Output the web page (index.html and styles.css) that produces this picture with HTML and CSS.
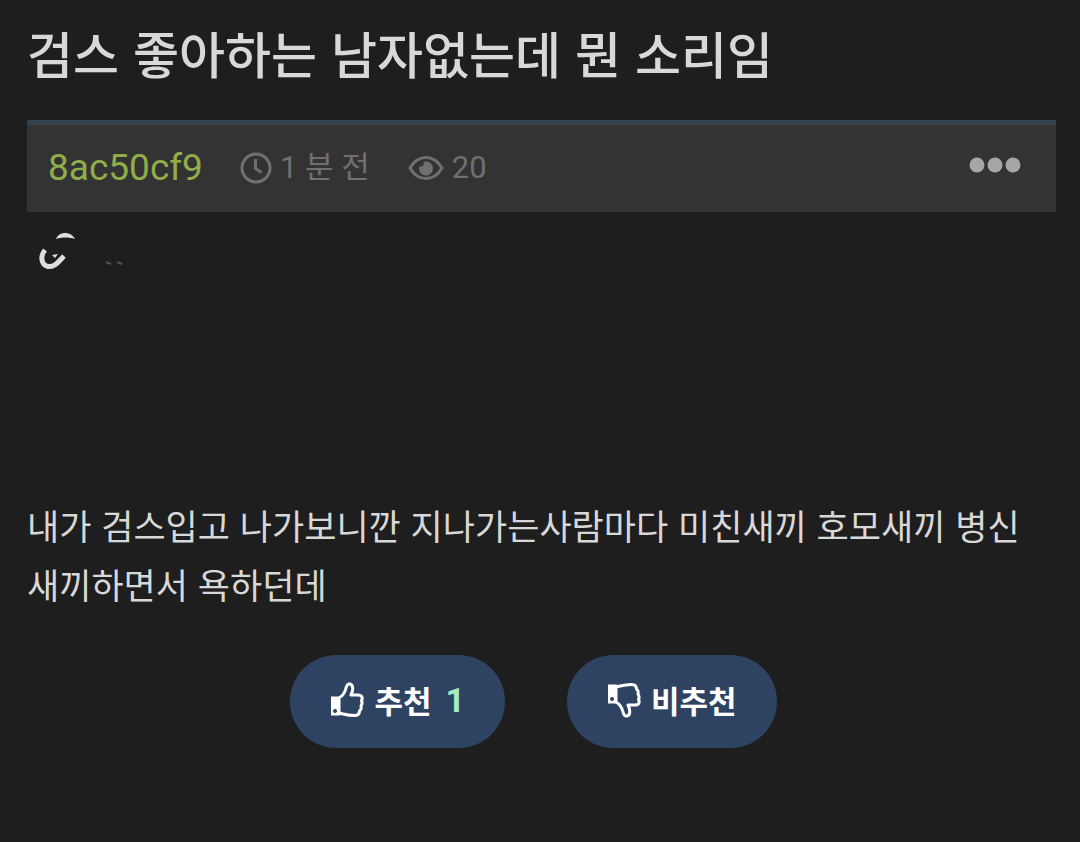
FILE: index.html
```html
<!DOCTYPE html>
<html lang="ko">
<head>
    <meta charset="UTF-8">
    <meta name="viewport" content="width=device-width, initial-scale=1.0">
    <title>검스 좋아하는 남자없는데 뭔 소리임</title>
    <link rel="stylesheet" href="styles.css">
</head>
<body>
    <article class="post">
        <h1 class="post-title">검스 좋아하는 남자없는데 뭔 소리임</h1>

        <header class="post-meta">
            <a class="author" href="#">8ac50cf9</a>
            <span class="meta-item meta-time">
                <svg class="icon-clock" viewBox="0 0 32 32" aria-hidden="true">
                    <circle cx="16" cy="16" r="14"/>
                    <path d="M15.500 7v9.500l6 4"/>
                </svg>
                <time>1 분 전</time>
            </span>
            <span class="meta-item meta-views">
                <svg class="icon-eye" viewBox="0 0 36 26" aria-hidden="true">
                    <path class="eye-line" d="M2 13C6 6 11.500 2.500 18 2.500S30 6 34 13c-4 7-9.500 10.500-16 10.500S6 20 2 13z"/>
                    <path class="eye-ball" d="M18 6.500a7 7 0 1 1-7 7c0-1 .2-1.800.5-2.500 2 1.600 5-.2 4-3.800.8-.5 1.600-.7 2.500-.7z"/>
                </svg>
                <span>20</span>
            </span>
            <button class="more" type="button" aria-label="더보기">
                <svg viewBox="0 0 52 16" aria-hidden="true">
                    <circle cx="8" cy="8" r="7.500"/>
                    <circle cx="26" cy="8" r="7.500"/>
                    <circle cx="44" cy="8" r="7.500"/>
                </svg>
            </button>
        </header>

        <div class="post-media">
            <svg class="sketch" viewBox="0 0 90 44" aria-hidden="true">
                <path class="sketch-bowl" d="M6 19C1 25 2 34 9 35.500c6 1 10-4 16-10.500"/>
                <path class="sketch-fill" d="M13 24l6-1-3 4zM17 8c3-8 15-8 19 0-6-2-13-2-19 0z"/>
                <path class="sketch-faint" d="M67 31l5 2M78 31l5 2"/>
            </svg>
        </div>

        <p class="post-text">내가 검스입고 나가보니깐 지나가는사람마다 미친새끼 호모새끼 병신새끼하면서 욕하던데</p>

        <div class="votes">
            <button class="vote" type="button">
                <svg class="icon-thumb" viewBox="0 0 34 36" aria-hidden="true">
                    <path class="thumb-line" d="M9 16c4-2 6-6 7-10 .7-3 2-4.500 4-4 4 1 3 7 1 11h7c4 0 5 3 3.500 5.500 1 2 .5 4-.5 5.500 .5 2 0 4-1.500 5 0 3-1.500 4.500-5 4.500-6 0-9-1-15.500-2.500z"/>
                    <path class="thumb-cuff" fill-rule="evenodd" d="M1 14.500h9v19H1zM5 27a2 2 0 1 0 .1 0z"/>
                </svg>
                <span>추천</span>
                <span class="vote-count">1</span>
            </button>
            <button class="vote" type="button">
                <svg class="icon-thumb" viewBox="0 0 34 36" aria-hidden="true">
                    <path class="thumb-line" d="M9 20c4 2 6 6 7 10 .7 3 2 4.500 4 4 4-1 3-7 1-11h7c4 0 5-3 3.500-5.500 1-2 .5-4-.5-5.500 .5-2 0-4-1.500-5 0-3-1.500-4.500-5-4.500-6 0-9 1-15.500 2.500z"/>
                    <path class="thumb-cuff" fill-rule="evenodd" d="M1 2.500h9v19H1zM5 15a2 2 0 1 0 .1 0z"/>
                </svg>
                <span>비추천</span>
            </button>
        </div>
    </article>
</body>
</html>
```
FILE: styles.css
```css
* {
    margin: 0;
    padding: 0;
    box-sizing: border-box;
}

body {
    background: #1e1e1e;
    color: #d8d8d8;
    font-family: Roboto, "Noto Sans CJK KR", sans-serif;
}

button {
    border: none;
    background: none;
    font: inherit;
    color: inherit;
    cursor: pointer;
}

.post {
    padding: 18px 24px 40px 27px;
}

.post-title {
    font-family: "Noto Sans CJK KR", sans-serif;
    font-size: 50px;
    font-weight: 500;
    line-height: 68px;
    margin-bottom: 34px;
}

.post-meta {
    display: flex;
    align-items: center;
    height: 92px;
    padding: 0 35px 2px 21px;
    background: #333333;
    border-top: 5px solid #33424f;
    color: #707070;
}

.author {
    color: #8fae4a;
    font-size: 37px;
    text-decoration: none;
    margin-right: 37px;
}

.meta-item {
    display: flex;
    align-items: center;
    gap: 8px;
    font-size: 31px;
    line-height: 40px;
}

.meta-time {
    margin-right: 38px;
}

.icon-clock {
    width: 32px;
    height: 32px;
    fill: none;
    stroke: #707070;
    stroke-width: 3;
}

.icon-eye {
    width: 36px;
    height: 26px;
}

.eye-line {
    fill: none;
    stroke: #707070;
    stroke-width: 3;
}

.eye-ball {
    fill: #707070;
}

.more {
    display: flex;
    margin-left: auto;
    padding-bottom: 6px;
}

.more svg {
    width: 52px;
    height: 16px;
    fill: #a6a6a6;
}

.post-media {
    height: 283px;
    padding: 19px 12px;
}

.sketch {
    display: block;
    width: 90px;
    height: 44px;
}

.sketch-bowl {
    fill: none;
    stroke: #dedede;
    stroke-width: 5;
}

.sketch-fill {
    fill: #dedede;
}

.sketch-faint {
    stroke: #505050;
    stroke-width: 2;
}

.post-text {
    font-family: "Noto Sans CJK KR", sans-serif;
    font-size: 35px;
    line-height: 59px;
    padding-right: 16px;
    word-break: break-all;
}

.votes {
    display: flex;
    justify-content: center;
    gap: 62px;
    margin-top: 42px;
    padding-right: 16px;
}

.vote {
    display: flex;
    align-items: center;
    gap: 10px;
    height: 93px;
    padding: 0 40px 4px;
    border-radius: 47px;
    background: #2e4362;
    color: #ffffff;
    font-family: "Noto Sans CJK KR", sans-serif;
    font-size: 31px;
    font-weight: 700;
}

.vote-count {
    color: #a9ecc0;
    font-family: Roboto, sans-serif;
    font-size: 34px;
    margin-left: 4px;
}

.icon-thumb {
    width: 34px;
    height: 36px;
}

.thumb-line {
    fill: none;
    stroke: #ffffff;
    stroke-width: 3;
    stroke-linejoin: round;
}

.thumb-cuff {
    fill: #ffffff;
}
```
